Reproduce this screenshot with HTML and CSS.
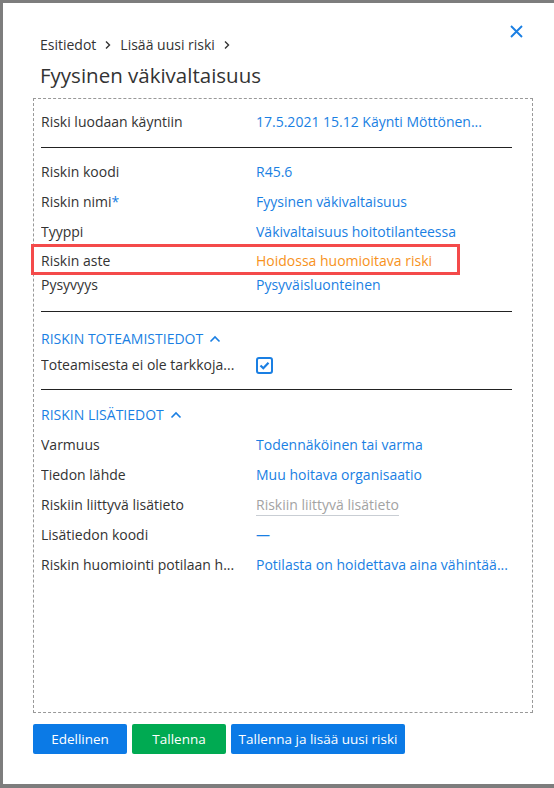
FILE: index.html
```html
<!DOCTYPE html>
<html lang="fi">
<head>
  <meta charset="UTF-8" />
  <meta name="viewport" content="width=device-width, initial-scale=1.0"/>
  <title>Lisää uusi riski</title>
  <link rel="stylesheet" href="styles.css">
</head>
<body>

  <div class="modal">
    <button class="close-button" aria-label="Sulje">
      <svg width="13" height="13" viewBox="0 0 13 13"><path d="M1 1 L12 12 M12 1 L1 12" stroke="#1a7fe3" stroke-width="1.9" fill="none"/></svg>
    </button>

    <div class="modal-header">
      <div class="breadcrumb">
        <span>Esitiedot</span>
        <svg class="crumb-arrow" width="8" height="10" viewBox="0 0 8 10"><path d="M2 1.5 L5.5 5 L2 8.5" stroke="#333" stroke-width="1.4" fill="none"/></svg>
        <span>Lisää uusi riski</span>
        <svg class="crumb-arrow" width="8" height="10" viewBox="0 0 8 10"><path d="M2 1.5 L5.5 5 L2 8.5" stroke="#333" stroke-width="1.4" fill="none"/></svg>
      </div>
      <h1>Fyysinen väkivaltaisuus</h1>
    </div>

    <div class="form-box">
      <div class="row first">
        <div class="label">Riski luodaan käyntiin</div>
        <div class="value">17.5.2021 15.12 Käynti Möttönen...</div>
      </div>

      <hr class="divider first-divider">

      <div class="row">
        <div class="label">Riskin koodi</div>
        <div class="value">R45.6</div>
      </div>
      <div class="row">
        <div class="label">Riskin nimi<span class="required">*</span></div>
        <div class="value">Fyysinen väkivaltaisuus</div>
      </div>
      <div class="row">
        <div class="label">Tyyppi</div>
        <div class="value">Väkivaltaisuus hoitotilanteessa</div>
      </div>
      <div class="row short marked">
        <div class="label">Riskin aste</div>
        <div class="value warning">Hoidossa huomioitava riski</div>
      </div>
      <div class="row short">
        <div class="label">Pysyvyys</div>
        <div class="value">Pysyväisluonteinen</div>
      </div>

      <hr class="divider after-basic">

      <div class="section-title first-section">
        RISKIN TOTEAMISTIEDOT
        <svg width="12" height="8" viewBox="0 0 12 8"><path d="M1.5 6.5 L6 2 L10.5 6.5" stroke="#1a7fe3" stroke-width="1.6" fill="none"/></svg>
      </div>
      <div class="row short check-row">
        <div class="label">Toteamisesta ei ole tarkkoja...</div>
        <div class="value">
          <span class="checkbox">
            <svg width="13" height="13" viewBox="0 0 13 13"><path d="M2.5 6.5 L5.3 9.2 L10.5 3.8" stroke="#1a7fe3" stroke-width="2.2" fill="none"/></svg>
          </span>
        </div>
      </div>

      <hr class="divider after-check">

      <div class="section-title">
        RISKIN LISÄTIEDOT
        <svg width="12" height="8" viewBox="0 0 12 8"><path d="M1.5 6.5 L6 2 L10.5 6.5" stroke="#1a7fe3" stroke-width="1.6" fill="none"/></svg>
      </div>
      <div class="row extra-first">
        <div class="label">Varmuus</div>
        <div class="value">Todennäköinen tai varma</div>
      </div>
      <div class="row">
        <div class="label">Tiedon lähde</div>
        <div class="value">Muu hoitava organisaatio</div>
      </div>
      <div class="row">
        <div class="label">Riskiin liittyvä lisätieto</div>
        <div class="value"><span class="placeholder">Riskiin liittyvä lisätieto</span></div>
      </div>
      <div class="row">
        <div class="label">Lisätiedon koodi</div>
        <div class="value">—</div>
      </div>
      <div class="row">
        <div class="label">Riskin huomiointi potilaan h...</div>
        <div class="value">Potilasta on hoidettava aina vähintää...</div>
      </div>
    </div>

    <div class="actions">
      <button class="btn btn-blue prev">Edellinen</button>
      <button class="btn btn-green save">Tallenna</button>
      <button class="btn btn-blue save-new">Tallenna ja lisää uusi riski</button>
    </div>
  </div>

</body>
</html>
```

FILE: styles.css
```css
html, body {
  height: 100%;
}

body {
  margin: 0;
  background: #7d7d7d;
  font-family: 'Open Sans', sans-serif;
  font-size: 14px;
  color: #333;
  overflow: hidden;
}

.modal {
  position: relative;
  box-sizing: border-box;
  width: 551px;
  height: 781px;
  margin: 3px 0 0 3px;
  padding: 0 21px 0 30px;
  background: #fff;
}

.close-button {
  position: absolute;
  top: 22px;
  right: 31px;
  padding: 0;
  border: none;
  background: none;
  cursor: pointer;
}

.modal-header {
  padding: 32px 0 0 7px;
}

.breadcrumb {
  display: flex;
  align-items: center;
  line-height: 20px;
}

.crumb-arrow {
  margin: 0 8px 0 8px;
}

h1 {
  margin: 5px 0 0;
  font-size: 20.5px;
  font-weight: normal;
  line-height: 30px;
  color: #333;
}

.form-box {
  box-sizing: border-box;
  height: 615px;
  margin-top: 8px;
  padding: 8px 20px 0 7px;
  border: 1px dashed #999;
}

.row {
  display: flex;
  line-height: 30px;
  white-space: nowrap;
}

.row.short {
  line-height: 24px;
}

.row.marked {
  position: relative;
  margin-top: 2px;
}

/* red frame around the highlighted row */
.row.marked::after {
  content: '';
  position: absolute;
  left: -10px;
  top: -5px;
  width: 423px;
  height: 25px;
  border: 3px solid #f44a4a;
}

.label {
  width: 200px;
  margin-right: 15px;
  overflow: hidden;
}

.value {
  flex: 1;
  overflow: hidden;
  color: #1a7fe3;
}

.value.warning {
  color: #f7921c;
}

.required {
  color: #1a7fe3;
}

.divider {
  height: 0;
  margin: 0;
  border: none;
  border-top: 1px solid #222;
}

.first-divider {
  margin: 10px 0 9px;
}

.after-basic {
  margin-top: 14px;
}

.after-check {
  margin-top: 12px;
}

.section-title {
  display: flex;
  align-items: center;
  gap: 6px;
  margin-top: 13px;
  line-height: 24px;
  color: #1a7fe3;
}

.first-section {
  margin-top: 15px;
}

.check-row {
  margin-top: 2px;
}

.extra-first {
  margin-top: 3px;
}

.checkbox {
  display: inline-flex;
  align-items: center;
  justify-content: center;
  box-sizing: border-box;
  width: 17px;
  height: 17px;
  margin-top: 4px;
  border: 2px solid #1a7fe3;
  border-radius: 3px;
  vertical-align: top;
}

.placeholder {
  color: #a3a3a3;
  border-bottom: 1px solid #c9ced4;
  padding-bottom: 1px;
}

.actions {
  display: flex;
  gap: 5px;
  margin-top: 11px;
}

.btn {
  height: 30px;
  padding: 0;
  border: none;
  border-radius: 2px;
  font-family: 'Open Sans', sans-serif;
  font-size: 13.5px;
  color: #fff;
  cursor: pointer;
}

.btn-blue {
  background: #0b7ae6;
}

.btn-green {
  background: #00aa52;
}

.prev, .save {
  width: 94px;
}

.save-new {
  width: 174px;
}
```
